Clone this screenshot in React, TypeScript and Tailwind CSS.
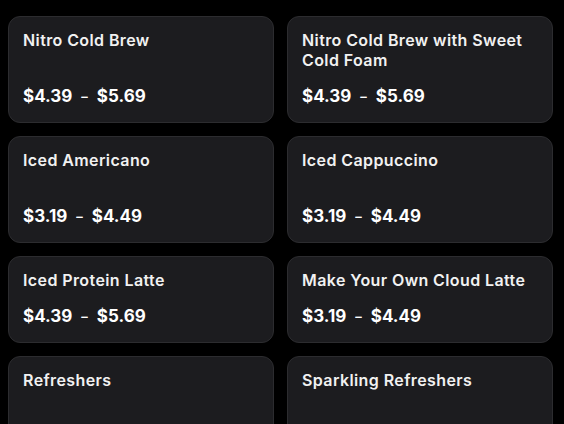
import React from 'react'

type Item = { name: string; min: string; max: string }

const rows: { h: string; items: Item[] }[] = [
  {
    h: 'h-[107px]',
    items: [
      { name: 'Nitro Cold Brew', min: '$4.39', max: '$5.69' },
      { name: 'Nitro Cold Brew with Sweet Cold Foam', min: '$4.39', max: '$5.69' },
    ],
  },
  {
    h: 'h-[107px]',
    items: [
      { name: 'Iced Americano', min: '$3.19', max: '$4.49' },
      { name: 'Iced Cappuccino', min: '$3.19', max: '$4.49' },
    ],
  },
  {
    h: 'h-[87px]',
    items: [
      { name: 'Iced Protein Latte', min: '$4.39', max: '$5.69' },
      { name: 'Make Your Own Cloud Latte', min: '$3.19', max: '$4.49' },
    ],
  },
]

const titleCls = 'text-[16px] font-semibold leading-5 tracking-[0.4px] text-[#f1f1f1]'

function MenuCard({ item, h }: { item: Item; h: string }) {
  return (
    <div className={`${h} flex flex-col justify-between rounded-xl border border-[#2c2c2f] bg-[#1c1c1f] px-[14px] pt-[13px] pb-[14px]`}>
      <div className={titleCls}>{item.name}</div>
      <div className="flex items-center text-[17px] font-bold leading-6 text-white">
        <span>{item.min}</span>
        <span className="mx-[9px] text-[13px] font-semibold">–</span>
        <span>{item.max}</span>
      </div>
    </div>
  )
}

export default function App() {
  return (
    <div
      className="h-[424px] w-[564px] overflow-hidden bg-black pl-2 pr-[11px] pt-4"
      style={{ fontFamily: 'Inter, "Noto Sans", sans-serif' }}
    >
      <div className="grid grid-cols-2 gap-[13px]">
        {rows.map((row) =>
          row.items.map((item) => <MenuCard key={item.name} item={item} h={row.h} />)
        )}
        <div className="h-[107px] rounded-xl border border-[#2c2c2f] bg-[#1c1c1f] px-[14px] pt-[13px]">
          <div className={titleCls}>Refreshers</div>
        </div>
        <div className="h-[107px] rounded-xl border border-[#2c2c2f] bg-[#1c1c1f] px-[14px] pt-[13px]">
          <div className={titleCls}>Sparkling Refreshers</div>
        </div>
      </div>
    </div>
  )
}
